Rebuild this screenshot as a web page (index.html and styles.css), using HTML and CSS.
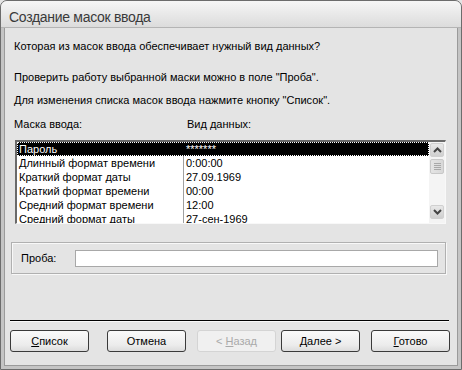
FILE: index.html
```html
<!DOCTYPE html>
<html lang="ru">
<head>
    <meta charset="UTF-8">
    <title>Создание масок ввода</title>
    <link rel="stylesheet" href="styles.css">
</head>
<body>
    <div class="window">
        <div class="title-bar">Создание масок ввода</div>
        <div class="client">
            <p class="line first">Которая из масок ввода обеспечивает нужный вид данных?</p>
            <p class="line second">Проверить работу выбранной маски можно в поле "Проба".</p>
            <p class="line third">Для изменения списка масок ввода нажмите кнопку "Список".</p>
            <div class="list-header">
                <span class="col-name">Маска ввода:</span>
                <span class="col-data">Вид данных:</span>
            </div>
            <div class="list-box">
                <div class="rows" id="rows"></div>
                <div class="scrollbar">
                    <div class="sb-btn">
                        <svg width="9" height="6" viewBox="0 0 9 6"><polyline points="1,5 4.5,1.5 8,5" fill="none" stroke="#444" stroke-width="2"/></svg>
                    </div>
                    <div class="sb-thumb">
                        <span></span><span></span><span></span><span></span>
                    </div>
                    <div class="sb-track"></div>
                    <div class="sb-btn">
                        <svg width="9" height="6" viewBox="0 0 9 6"><polyline points="1,1 4.5,4.5 8,1" fill="none" stroke="#444" stroke-width="2"/></svg>
                    </div>
                </div>
            </div>
            <div class="probe">
                <label class="probe-label">Проба:</label>
                <div class="probe-input"></div>
            </div>
            <div class="separator"></div>
            <div class="buttons">
                <button class="btn"><u>С</u>писок</button>
                <button class="btn">Отмена</button>
                <button class="btn disabled">&lt; <u>Н</u>азад</button>
                <button class="btn default"><u>Д</u>алее &gt;</button>
                <button class="btn"><u>Г</u>отово</button>
            </div>
        </div>
    </div>

    <script>
        const masks = [
            { name: "Пароль", data: "*******" },
            { name: "Длинный формат времени", data: "0:00:00" },
            { name: "Краткий формат даты", data: "27.09.1969" },
            { name: "Краткий формат времени", data: "00:00" },
            { name: "Средний формат времени", data: "12:00" },
            { name: "Средний формат даты", data: "27-сен-1969" }
        ];

        const rows = document.getElementById('rows');
        masks.forEach((m, i) => {
            const row = document.createElement('div');
            row.className = 'row' + (i === 0 ? ' selected' : '');
            row.innerHTML = `<span class="cell-name">${m.name}</span><span class="cell-data">${m.data}</span>`;
            rows.appendChild(row);
        });
    </script>
</body>
</html>
```

FILE: styles.css
```css
body, html {
    margin: 0;
    padding: 0;
    background-color: #e4e4e4;
    font-family: "Liberation Sans", Arial, sans-serif;
    font-size: 11px;
    color: #000;
}
.window {
    width: 460px;
    height: 368px;
    border: 1px solid #6c6c6c;
    border-radius: 7px 7px 0 0;
    background-color: #c4c4c4;
    display: flex;
    flex-direction: column;
    overflow: hidden;
}
.title-bar {
    height: 27px;
    flex-shrink: 0;
    box-sizing: border-box;
    padding: 8px 0 0 8px;
    font-size: 14px;
    line-height: 16px;
    letter-spacing: -0.3px;
    color: #3a3a3a;
    background: linear-gradient(#f6f6f6, #e6e6e6 60%, #dcdcdc);
    border-bottom: 1px solid #b4b4b4;
}
.client {
    flex-grow: 1;
    margin: 0 3px 3px 3px;
    background-color: #e4e4e4;
    border-left: 1px solid #9a9a9a;
    border-right: 1px solid #9a9a9a;
    border-bottom: 1px solid #9a9a9a;
    padding: 0 7px 0 5px;
    display: flex;
    flex-direction: column;
}
.client > * {
    flex-shrink: 0;
}
.line {
    margin: 0;
    padding-left: 4px;
    height: 13px;
    line-height: 13px;
}
.line.first {
    margin-top: 12px;
}
.line.second {
    margin-top: 18px;
}
.line.third {
    margin-top: 10px;
}
.list-header {
    display: flex;
    margin-top: 11px;
    padding-left: 4px;
    height: 13px;
    line-height: 13px;
}
.col-name {
    width: 173px;
}
.list-box {
    margin: 9px 4px 0 5px;
    height: 84px;
    box-sizing: border-box;
    border-top: 2px solid #6a6a6a;
    border-left: 2px solid #6a6a6a;
    border-right: 1px solid #f8f8f8;
    border-bottom: 1px solid #f8f8f8;
    background-color: #fff;
    display: flex;
    overflow: hidden;
}
.rows {
    flex-grow: 1;
}
.row {
    display: flex;
    height: 14px;
    line-height: 14px;
}
.row.selected {
    background-color: #000;
    color: #fff;
    outline: 1px dotted #fff;
    outline-offset: -1px;
}
.cell-name {
    width: 167px;
    box-sizing: border-box;
    padding-left: 2px;
    border-right: 1px solid #a0a0a0;
}
.row.selected .cell-name {
    border-right-color: #000;
}
.cell-data {
    padding-left: 2px;
}
.scrollbar {
    width: 16px;
    background-color: #f4f4f4;
    display: flex;
    flex-direction: column;
}
.sb-btn {
    height: 14px;
    margin: 1px 1px 2px 1px;
    border-radius: 2px;
    background: linear-gradient(#e8e8e8, #cfcfcf);
    border: 1px solid #d0d0d0;
    box-sizing: border-box;
    display: flex;
    align-items: center;
    justify-content: center;
}
.sb-btn:last-child {
    margin: 2px 1px 4px 1px;
}
.sb-thumb {
    height: 15px;
    margin: 0 1px;
    border-radius: 2px;
    border: 1px solid #c8c8c8;
    background: linear-gradient(to right, #e4e4e4, #d8d8d8);
    box-sizing: border-box;
    display: flex;
    flex-direction: column;
    align-items: center;
    justify-content: center;
    gap: 1px;
}
.sb-thumb span {
    width: 7px;
    height: 1px;
    background-color: #a8a8a8;
}
.sb-track {
    flex-grow: 1;
}
.probe {
    margin: 18px 4px 0 1px;
    padding: 0 7px 0 9px;
    height: 32px;
    box-sizing: border-box;
    border: 1px solid #b0b0b0;
    box-shadow: inset 1px 1px 0 #f8f8f8, 1px 1px 0 #f8f8f8;
    display: flex;
    align-items: center;
}
.probe-label {
    width: 54px;
}
.probe-input {
    flex-grow: 1;
    height: 17px;
    box-sizing: border-box;
    background-color: #fff;
    border: 1px solid #a8a8a8;
}
.separator {
    margin: 46px 1px 0 0;
    height: 1px;
    background-color: #000;
    border-bottom: 1px solid #f8f8f8;
}
.buttons {
    display: flex;
    margin-top: 8px;
}
.btn {
    font-family: "Liberation Sans", Arial, sans-serif;
    font-size: 11px;
    color: #000;
    width: 79px;
    height: 22px;
    border: 1px solid #3a3a3a;
    border-radius: 3px;
    background: linear-gradient(#fafafa, #ececec 70%, #dcdcdc);
    margin-right: 18px;
    padding: 0;
}
.btn:nth-child(2) {
    margin-right: 11px;
}
.btn:nth-child(3) {
    margin-right: 5px;
}
.btn:nth-child(4) {
    margin-right: 11px;
}
.btn:last-child {
    margin-right: 0;
}
.btn.disabled {
    color: #aaa;
    border-color: #d4d4d4;
    background: #f0f0f0;
}
```
